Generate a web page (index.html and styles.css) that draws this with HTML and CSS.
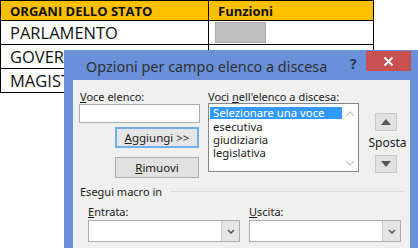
FILE: index.html
```html
<!DOCTYPE html>
<html lang="it">
<head>
    <meta charset="UTF-8">
    <title>Opzioni per campo elenco a discesa</title>
    <link rel="stylesheet" href="styles.css">
</head>
<body>
    <table class="sheet">
        <tr class="head">
            <td class="c1">ORGANI DELLO STATO</td>
            <td class="c2">Funzioni</td>
        </tr>
        <tr>
            <td>PARLAMENTO</td>
            <td><div class="field-box"></div></td>
        </tr>
        <tr>
            <td>GOVERNO</td>
            <td></td>
        </tr>
        <tr>
            <td>MAGISTRATURA</td>
            <td></td>
        </tr>
    </table>

    <div class="dialog">
        <div class="titlebar">
            <span class="title">Opzioni per campo elenco a discesa</span>
            <span class="help">?</span>
            <span class="close">
                <svg width="11" height="11" viewBox="0 0 11 11"><path d="M1.5 1.5 L9.5 9.5 M9.5 1.5 L1.5 9.5" stroke="#fff" stroke-width="2"/></svg>
            </span>
        </div>
        <div class="panel">
            <div class="top-row">
                <div class="col-left">
                    <label class="lbl"><u>V</u>oce elenco:</label>
                    <div class="textbox"></div>
                    <button class="btn btn-default"><u>A</u>ggiungi &gt;&gt;</button>
                    <button class="btn btn-second"><u>R</u>imuovi</button>
                </div>
                <div class="col-list">
                    <label class="lbl">Voci <u>n</u>ell'elenco a discesa:</label>
                    <div class="listbox">
                        <ul class="items">
                            <li class="selected">Selezionare una voce</li>
                            <li>esecutiva</li>
                            <li>giudiziaria</li>
                            <li>legislativa</li>
                        </ul>
                        <div class="scroll">
                            <svg width="10" height="6" viewBox="0 0 10 6"><path d="M1 5 L5 1 L9 5" fill="none" stroke="#c8c8c8" stroke-width="1.3"/></svg>
                            <svg width="10" height="6" viewBox="0 0 10 6"><path d="M1 1 L5 5 L9 1" fill="none" stroke="#c8c8c8" stroke-width="1.3"/></svg>
                        </div>
                    </div>
                </div>
                <div class="col-move">
                    <button class="move-btn"><svg width="10" height="6" viewBox="0 0 10 6"><path d="M0 6 L5 0 L10 6 Z" fill="#555"/></svg></button>
                    <span class="move-lbl">Sposta</span>
                    <button class="move-btn"><svg width="10" height="6" viewBox="0 0 10 6"><path d="M0 0 L5 6 L10 0 Z" fill="#555"/></svg></button>
                </div>
            </div>

            <div class="group-title">
                <span>Esegui macro in</span>
                <div class="group-line"></div>
            </div>

            <div class="macro-row">
                <div class="macro-col">
                    <label class="lbl"><u>E</u>ntrata:</label>
                    <div class="combo">
                        <div class="combo-btn"><svg width="8" height="5" viewBox="0 0 8 5"><path d="M1 1 L4 4 L7 1" fill="none" stroke="#555" stroke-width="1.5"/></svg></div>
                    </div>
                </div>
                <div class="macro-col">
                    <label class="lbl"><u>U</u>scita:</label>
                    <div class="combo">
                        <div class="combo-btn"><svg width="8" height="5" viewBox="0 0 8 5"><path d="M1 1 L4 4 L7 1" fill="none" stroke="#555" stroke-width="1.5"/></svg></div>
                    </div>
                </div>
            </div>
        </div>
    </div>
</body>
</html>
```

FILE: styles.css
```css
:root {
    --sheet-yellow: #ffc000;
    --frame-blue: #6990d8;
    --panel-gray: #f0f0f0;
    --ctl-border: #abadb3;
    --btn-gray: #e1e1e1;
    --btn-border: #adadad;
    --select-blue: #3399ff;
}
body { margin: 0; background: #fff; font-family: "Open Sans", "Noto Sans", sans-serif; overflow: hidden; }

/* foglio excel */
.sheet { border-collapse: collapse; width: 374px; table-layout: fixed; }
.sheet td { border: 1px solid #000; padding: 0 0 0 9px; height: 22px; font-size: 16.5px; color: #111; white-space: nowrap; overflow: hidden; }
.sheet .c1 { width: 198px; }
.sheet .head td { background: var(--sheet-yellow); font-size: 13px; font-weight: 700; height: 19px; }
.field-box { width: 51px; height: 21px; background: #c0c0c0; border: 1px solid #a9a9a9; box-sizing: border-box; margin-left: -3px; }

/* finestra di dialogo */
.dialog { position: absolute; left: 64px; top: 50px; width: 354px; height: 198px; background: var(--frame-blue); padding: 0 8px 0 9px; box-sizing: border-box; }
.titlebar { height: 30px; display: flex; align-items: center; position: relative; }
.title { font-size: 14.4px; color: #303030; margin-left: 13px; margin-top: 3px; font-family: "Noto Sans", sans-serif; }
.help { position: absolute; left: 277px; top: 4px; font-weight: 700; font-size: 14px; color: #26324a; }
.close { position: absolute; left: 293px; top: 1px; width: 45px; height: 20px; background: #c75050; display: flex; align-items: center; justify-content: center; }

.panel { background: var(--panel-gray); height: 168px; padding: 9px 0 0 6px; box-sizing: border-box; font-family: "Noto Sans", sans-serif; font-size: 11px; color: #1a1a1a; }
.lbl { display: block; height: 15px; line-height: 15px; }
.lbl u { text-decoration-thickness: 1px; }

.top-row { display: flex; }
.col-left { width: 121px; display: flex; flex-direction: column; }
.col-left .lbl { margin-left: 1px; }
.textbox { height: 19px; background: #fff; border: 1px solid var(--ctl-border); box-sizing: border-box; }
.btn { font-family: inherit; font-size: 11.5px; color: #1a1a1a; width: 84px; height: 21px; align-self: flex-end; margin-right: 1px; padding: 0; background: var(--btn-gray); border: 1px solid var(--btn-border); }
.btn-default { margin-top: 4px; border: 2px solid #6fb0ea; background: #e6e6e6; }
.btn-second { margin-top: 9px; }

.col-list { width: 151px; margin-left: 8px; }
.listbox { height: 69px; margin-top: -1px; background: #fff; border: 1px solid #828790; box-sizing: border-box; display: flex; }
.items { list-style: none; margin: 0; padding: 3px 0 0 1px; flex: 1; font-size: 11.3px; }
.items li { height: 13px; line-height: 13px; padding-left: 3px; }
.items .selected { background: var(--select-blue); color: #fff; height: 12px; line-height: 12px; margin-bottom: 1px; }
.scroll { width: 16px; display: flex; flex-direction: column; justify-content: space-between; align-items: center; padding: 7px 0 5px; }

.col-move { width: 44px; margin-left: 5px; display: flex; flex-direction: column; align-items: center; padding-top: 24px; }
.move-btn { width: 22px; height: 18px; padding: 0; background: var(--btn-gray); border: 1px solid #c9c9c9; display: flex; align-items: center; justify-content: center; }
.move-lbl { font-size: 12px; margin: 5px 0 5px 3px; line-height: 14px; }

.group-title { display: flex; align-items: center; margin-top: 6px; height: 15px; margin-left: 1px; }
.group-line { flex: 1; height: 1px; background: #dcdcdc; margin: 0 5px 0 8px; }

.macro-row { display: flex; margin-top: 6px; margin-left: 9px; }
.macro-col { width: 154px; margin-right: 9px; }
.macro-col .lbl { height: 14px; line-height: 14px; }
.combo { height: 22px; margin-top: 1px; background: #fff; border: 1px solid var(--ctl-border); box-sizing: border-box; display: flex; justify-content: flex-end; }
.combo-btn { width: 17px; background: #e5e5e5; border-left: 1px solid #c8c8c8; display: flex; align-items: center; justify-content: center; }
```
